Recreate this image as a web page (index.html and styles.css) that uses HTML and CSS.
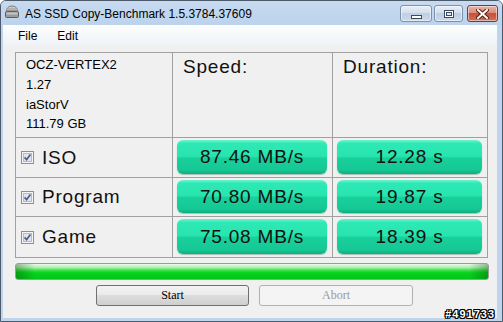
FILE: index.html
```html
<!DOCTYPE html>
<html lang="en">
<head>
  <meta charset="UTF-8" />
  <title>AS SSD Copy-Benchmark</title>
  <link rel="stylesheet" href="styles.css">
</head>
<body>
  <div class="window">
    <div class="titlebar">
      <svg class="app-icon" width="16" height="14" viewBox="0 0 16 14">
        <path d="M2.5 6 Q3 1 8 1 Q13 1 13.5 6 Z" fill="#d6d6d6" stroke="#7a7a7a"/>
        <path d="M5 3v3 M7 2.5v3.5 M9 2.5v3.5 M11 3v3" stroke="#8c8c8c"/>
        <rect x="1.5" y="6.5" width="13" height="6" rx="1" fill="#9a9a9a" stroke="#5e5e5e"/>
        <rect x="2.5" y="7.5" width="11" height="2" fill="#c4c4c4"/>
      </svg>
      <span class="title">AS SSD Copy-Benchmark 1.5.3784.37609</span>
      <div class="controls">
        <div class="ctl ctl-min">
          <svg width="11" height="4" viewBox="0 0 11 4"><rect x="0.5" y="0.5" width="10" height="3" fill="#fff" stroke="#3b4a5e"/></svg>
        </div>
        <div class="ctl ctl-max">
          <svg width="10" height="8" viewBox="0 0 10 8"><rect x="0.5" y="0.5" width="9" height="7" fill="#fff" stroke="#3b4a5e"/><rect x="2.5" y="2.5" width="5" height="3" fill="#dfe8f3" stroke="#3b4a5e"/></svg>
        </div>
        <div class="ctl ctl-close">
          <svg width="13" height="10" viewBox="0 0 13 10"><path d="M2 1 L11 9 M11 1 L2 9" stroke="#5a1f16" stroke-width="4" stroke-linecap="square"/><path d="M2 1 L11 9 M11 1 L2 9" stroke="#fff" stroke-width="2" stroke-linecap="square"/></svg>
        </div>
      </div>
    </div>

    <div class="frame">
      <div class="menubar">
        <span class="menu-item">File</span>
        <span class="menu-item">Edit</span>
      </div>

      <div class="client">
        <div class="grid">
          <div class="cell info">
            <div>OCZ-VERTEX2</div>
            <div>1.27</div>
            <div>iaStorV</div>
            <div class="last">111.79 GB</div>
          </div>
          <div class="cell head">Speed:</div>
          <div class="cell head">Duration:</div>

          <div class="cell label">
            <svg class="check" width="13" height="13" viewBox="0 0 13 13"><rect x="0.5" y="0.5" width="12" height="12" fill="#f4f4f4" stroke="#8e8f8f"/><rect x="2.5" y="2.5" width="8" height="8" fill="#e2e5ea" stroke="#b6bcc6"/><path d="M3.6 6.4 L5.6 8.7 L9.4 3.6" fill="none" stroke="#4a5c92" stroke-width="1.7"/></svg>
            ISO
          </div>
          <div class="cell val"><div class="box">87.46 MB/s</div></div>
          <div class="cell val"><div class="box">12.28 s</div></div>

          <div class="cell label">
            <svg class="check" width="13" height="13" viewBox="0 0 13 13"><rect x="0.5" y="0.5" width="12" height="12" fill="#f4f4f4" stroke="#8e8f8f"/><rect x="2.5" y="2.5" width="8" height="8" fill="#e2e5ea" stroke="#b6bcc6"/><path d="M3.6 6.4 L5.6 8.7 L9.4 3.6" fill="none" stroke="#4a5c92" stroke-width="1.7"/></svg>
            Program
          </div>
          <div class="cell val"><div class="box">70.80 MB/s</div></div>
          <div class="cell val"><div class="box">19.87 s</div></div>

          <div class="cell label">
            <svg class="check" width="13" height="13" viewBox="0 0 13 13"><rect x="0.5" y="0.5" width="12" height="12" fill="#f4f4f4" stroke="#8e8f8f"/><rect x="2.5" y="2.5" width="8" height="8" fill="#e2e5ea" stroke="#b6bcc6"/><path d="M3.6 6.4 L5.6 8.7 L9.4 3.6" fill="none" stroke="#4a5c92" stroke-width="1.7"/></svg>
            Game
          </div>
          <div class="cell val"><div class="box">75.08 MB/s</div></div>
          <div class="cell val"><div class="box">18.39 s</div></div>
        </div>

        <div class="progress"></div>

        <div class="buttons">
          <button class="btn">Start</button>
          <button class="btn" disabled>Abort</button>
        </div>
      </div>
    </div>

    <div class="watermark">#491733</div>
  </div>
</body>
</html>
```

FILE: styles.css
```css
* { box-sizing: border-box; }
body {
  margin: 0;
  font-family: "Liberation Sans", Arial, sans-serif;
  background: #fff;
  color: #000;
}
.window {
  position: relative;
  width: 503px;
  height: 322px;
  border: 1px solid #4c5a6a;
  border-radius: 6px 6px 0 0;
  background: #bfd5ee;
  display: flex;
  flex-direction: column;
  overflow: hidden;
}

/* Title bar */
.titlebar {
  height: 24px;
  display: flex;
  align-items: flex-start;
  padding: 0 4px 0 3px;
  background: linear-gradient(#c6daf0, #bcd3ec);
}
.app-icon { margin-top: 4px; flex: none; }
.title {
  margin-left: 5px;
  font-size: 12px;
  line-height: 24px;
  padding-top: 1px;
}
.controls {
  margin-left: auto;
  margin-top: 4px;
  display: flex;
}
.ctl {
  height: 17px;
  border: 1px solid #7d91ad;
  border-radius: 3px;
  display: flex;
  align-items: center;
  justify-content: center;
  background: linear-gradient(#e8eff8, #d3dfee 45%, #bfcfe4 50%, #cbd9eb);
  box-shadow: inset 0 0 0 1px rgba(255,255,255,0.5);
}
.ctl-min { width: 32px; align-items: flex-end; padding-bottom: 2px; }
.ctl-max { width: 29px; margin-left: 2px; }
.ctl-close {
  width: 31px;
  margin-left: 4px;
  border-color: #7a3a30;
  background: linear-gradient(#eab0a3, #dc8d7b 45%, #c6503b 50%, #d0705a);
}

/* Frame + menu */
.frame {
  flex: 1;
  display: flex;
  flex-direction: column;
  padding: 0 5px 3px 2px;
}
.menubar {
  height: 21px;
  display: flex;
  padding-left: 5px;
  background: linear-gradient(#fdfdfe, #eef2f7);
  font-size: 12px;
  line-height: 21px;
}
.menu-item { padding: 1px 10px 0; }

.client {
  flex: 1;
  background: #f0f0f0;
  padding: 6px 0 0 12px;
}

/* Result table */
.grid {
  width: 473px;
  display: grid;
  grid-template-columns: 156px 159px 154px;
  grid-template-rows: 84px 39px 38px 40px;
  gap: 1px;
  background: #a0a0a0;
  border: 1px solid #a0a0a0;
}
.cell { background: #f0f0f0; }
.info {
  padding: 2px 0 0 10px;
  font-size: 13px;
  line-height: 20px;
}
.info .last { margin-top: -1px; }
.head {
  padding: 3px 0 0 10px;
  font-size: 19px;
  letter-spacing: 0.8px;
  line-height: 22px;
  color: #111;
}
.label {
  display: flex;
  align-items: center;
  padding-left: 5px;
  font-size: 19px;
  letter-spacing: 0.8px;
  color: #111;
}
.check { margin-right: 8px; flex: none; }
.val { padding: 2px 5px 3px 4px; }
.box {
  height: 100%;
  border-radius: 6px;
  display: flex;
  align-items: center;
  justify-content: center;
  font-size: 19px;
  letter-spacing: 0.8px;
  color: #111;
  background: linear-gradient(#6ff5d0 0%, #2ee9b5 10%, #28e4ae 48%, #18d09b 53%, #15c894 88%, #0eae7f 100%);
  box-shadow: 0 1px 1px rgba(0,80,50,0.3);
}

/* Progress */
.progress {
  width: 474px;
  height: 17px;
  margin-top: 5px;
  border: 1px solid #9c9c9c;
  border-radius: 3px;
  background:
    linear-gradient(90deg, rgba(0,70,0,0.35), rgba(0,70,0,0) 4%, rgba(0,70,0,0) 96%, rgba(0,70,0,0.35)),
    linear-gradient(#e8fbe8 0%, #b4f0b4 22%, #3edf4c 42%, #07d31d 58%, #03c619 100%);
}

/* Buttons */
.buttons {
  display: flex;
  gap: 10px;
  margin-top: 5px;
  padding-left: 81px;
}
.btn {
  width: 153px;
  height: 21px;
  padding: 0;
  border: 1px solid #707070;
  border-radius: 3px;
  font-family: "Liberation Serif", "Times New Roman", serif;
  font-size: 12px;
  color: #000;
  background: linear-gradient(#f2f2f2, #ebebeb 45%, #dddddd 50%, #cfcfcf);
}
.btn:disabled {
  width: 154px;
  border-color: #adb2b5;
  background: #f4f4f4;
  color: #9a9a9a;
}

.watermark {
  position: absolute;
  right: 7px;
  bottom: 1px;
  font-size: 11px;
  font-weight: bold;
  letter-spacing: 1px;
  color: #fff;
  text-shadow: 1px 0 #000, -1px 0 #000, 0 1px #000, 0 -1px #000,
    1px 1px #000, -1px -1px #000, 1px -1px #000, -1px 1px #000;
}
```
